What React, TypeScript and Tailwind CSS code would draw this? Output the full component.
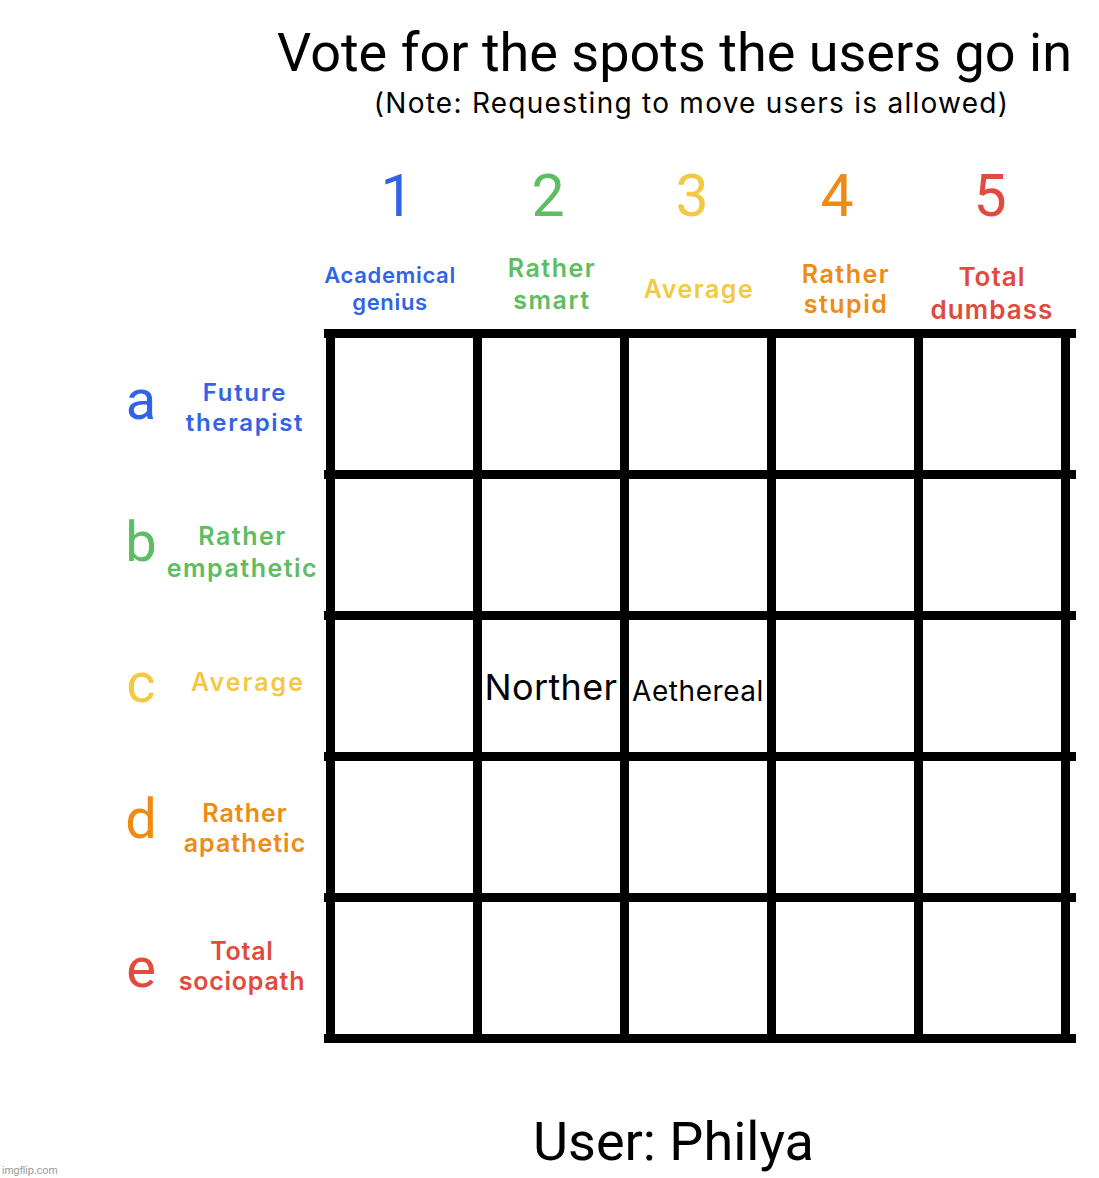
const cols = [
  { n: "1", color: "text-[#3163e6]", numCls: "mr-[13px]", label: ["Academical", "genius"], labelCls: "mr-[27px] mt-[0px] text-[22px] leading-[27px] tracking-[0.03em]" },
  { n: "2", color: "text-[#5dbd61]", numCls: "mr-[5px]", label: ["Rather", "smart"], labelCls: "ml-[3px] -mt-[10px] text-[25px] leading-[32px] tracking-[0.06em]" },
  { n: "3", color: "text-[#f3c944]", numCls: "mr-[11px]", label: ["Average"], labelCls: "ml-[3px] mt-[0px] text-[25px] leading-[30px] tracking-[0.06em]" },
  { n: "4", color: "text-[#ee8b12]", numCls: "mr-[15px]", label: ["Rather", "stupid"], labelCls: "ml-[3px] mt-[0px] text-[25px] leading-[30px] tracking-[0.06em]" },
  { n: "5", color: "text-[#e04b3d]", numCls: "mr-[3px]", label: ["Total", "dumbass"], labelCls: "ml-[1px] mt-[8px] text-[26px] leading-[33px] tracking-[0.04em]" },
];

const rows = [
  { l: "a", color: "text-[#3163e6]", letterCls: "-mt-[8px]", label: ["Future", "therapist"], labelCls: "mt-[8px] text-[24px] leading-[30px] tracking-[0.07em]" },
  { l: "b", color: "text-[#5dbd61]", letterCls: "-mt-[6px]", label: ["Rather", "empathetic"], labelCls: "mt-[14px] -ml-[5px] text-[25px] leading-[32px] tracking-[0.06em]" },
  { l: "c", color: "text-[#f3c944]", letterCls: "-mt-[6px]", label: ["Average"], labelCls: "-mt-[8px] ml-[6px] text-[25px] leading-[30px] tracking-[0.08em]" },
  { l: "d", color: "text-[#ee8b12]", letterCls: "-mt-[16px]", label: ["Rather", "apathetic"], labelCls: "mt-[2px] text-[25px] leading-[30px] tracking-[0.04em]" },
  { l: "e", color: "text-[#e04b3d]", letterCls: "mt-[0px]", label: ["Total", "sociopath"], labelCls: "-mt-[4px] -ml-[6px] text-[25px] leading-[30px] tracking-[0.03em]" },
];

const names: Record<string, { text: string; cls: string }> = {
  "2-1": { text: "Norther", cls: "text-[36px] tracking-[0.01em] mt-[2px]" },
  "2-2": { text: "Aethereal", cls: "text-[28px] tracking-[0.02em] mt-[10px]" },
};

const sans = "font-['Roboto',sans-serif]";
const label = "font-['Inter',sans-serif] font-semibold";

function Bar() {
  return <div className="h-[9px] w-full bg-black" />;
}

export default function App() {
  return (
    <div className={`relative w-[1099px] h-[1178px] overflow-hidden bg-white text-black ${sans}`}>
      {/* Heading */}
      <div className="pl-[250px] pt-[26px] text-center">
        <h1 className="text-[54px] leading-none font-normal whitespace-nowrap">Vote for the spots the users go in</h1>
      </div>
      <div className="pl-[284px] pt-[9px] text-center">
        <p className="h-[28px] text-[28px] leading-none whitespace-nowrap font-['Inter',sans-serif] tracking-[0.045em]">
          (Note: Requesting to move users is allowed)
        </p>
      </div>

      {/* Column headers */}
      <div className="flex pl-[330px] pt-[49px]">
        {cols.map((c) => (
          <div key={c.n} className="w-[147px] flex flex-col items-center">
            <div className={`h-[59px] text-[59px] leading-none ${c.color} ${c.numCls}`}>{c.n}</div>
          </div>
        ))}
      </div>
      <div className="flex pl-[330px] h-[104px] pt-[24px]">
        {cols.map((c) => (
          <div key={c.n} className="w-[147px] h-[80px] flex flex-col items-center justify-center">
            <div className={`flex flex-col items-center whitespace-nowrap ${label} ${c.color} ${c.labelCls}`}>
              {c.label.map((t) => (
                <span key={t}>{t}</span>
              ))}
            </div>
          </div>
        ))}
      </div>

      {/* Grid */}
      <div className="flex flex-col">
        {rows.map((r, ri) => (
          <div key={r.l} className="flex h-[141px]">
            <div className="w-[324px] flex pl-[114px] pt-[9px]">
              <div className={`w-[54px] h-[132px] flex items-center justify-center text-[56px] leading-none ${r.color}`}>
                <span className={r.letterCls}>{r.l}</span>
              </div>
              <div className="w-[154px] h-[132px] flex flex-col items-center justify-center">
                <div className={`flex flex-col items-center whitespace-nowrap ${label} ${r.color} ${r.labelCls}`}>
                  {r.label.map((t) => (
                    <span key={t}>{t}</span>
                  ))}
                </div>
              </div>
            </div>
            <div className="w-[752px] flex flex-col">
              <Bar />
              <div className="flex h-[132px] pl-[2px]">
                {[0, 1, 2, 3, 4].map((ci) => {
                  const name = names[`${ri}-${ci}`];
                  return (
                    <div key={ci} className="flex">
                      <div className="w-[9px] bg-black" />
                      <div className="w-[138px] flex items-center justify-center">
                        {name && (
                          <span className={`font-['Inter',sans-serif] leading-none whitespace-nowrap ${name.cls}`}>{name.text}</span>
                        )}
                      </div>
                    </div>
                  );
                })}
                <div className="w-[9px] bg-black" />
              </div>
            </div>
          </div>
        ))}
        <div className="flex">
          <div className="ml-[324px] w-[752px]">
            <Bar />
          </div>
        </div>
      </div>

      {/* Footer */}
      <div className="pl-[248px] pt-[72px] text-center">
        <p className="text-[54px] leading-none whitespace-nowrap">User: Philya</p>
      </div>

      <span className="absolute left-[2px] bottom-[2px] text-[11px] leading-none text-[#9a9a9a] font-['Liberation_Sans',sans-serif]">
        imgflip.com
      </span>
    </div>
  );
}
